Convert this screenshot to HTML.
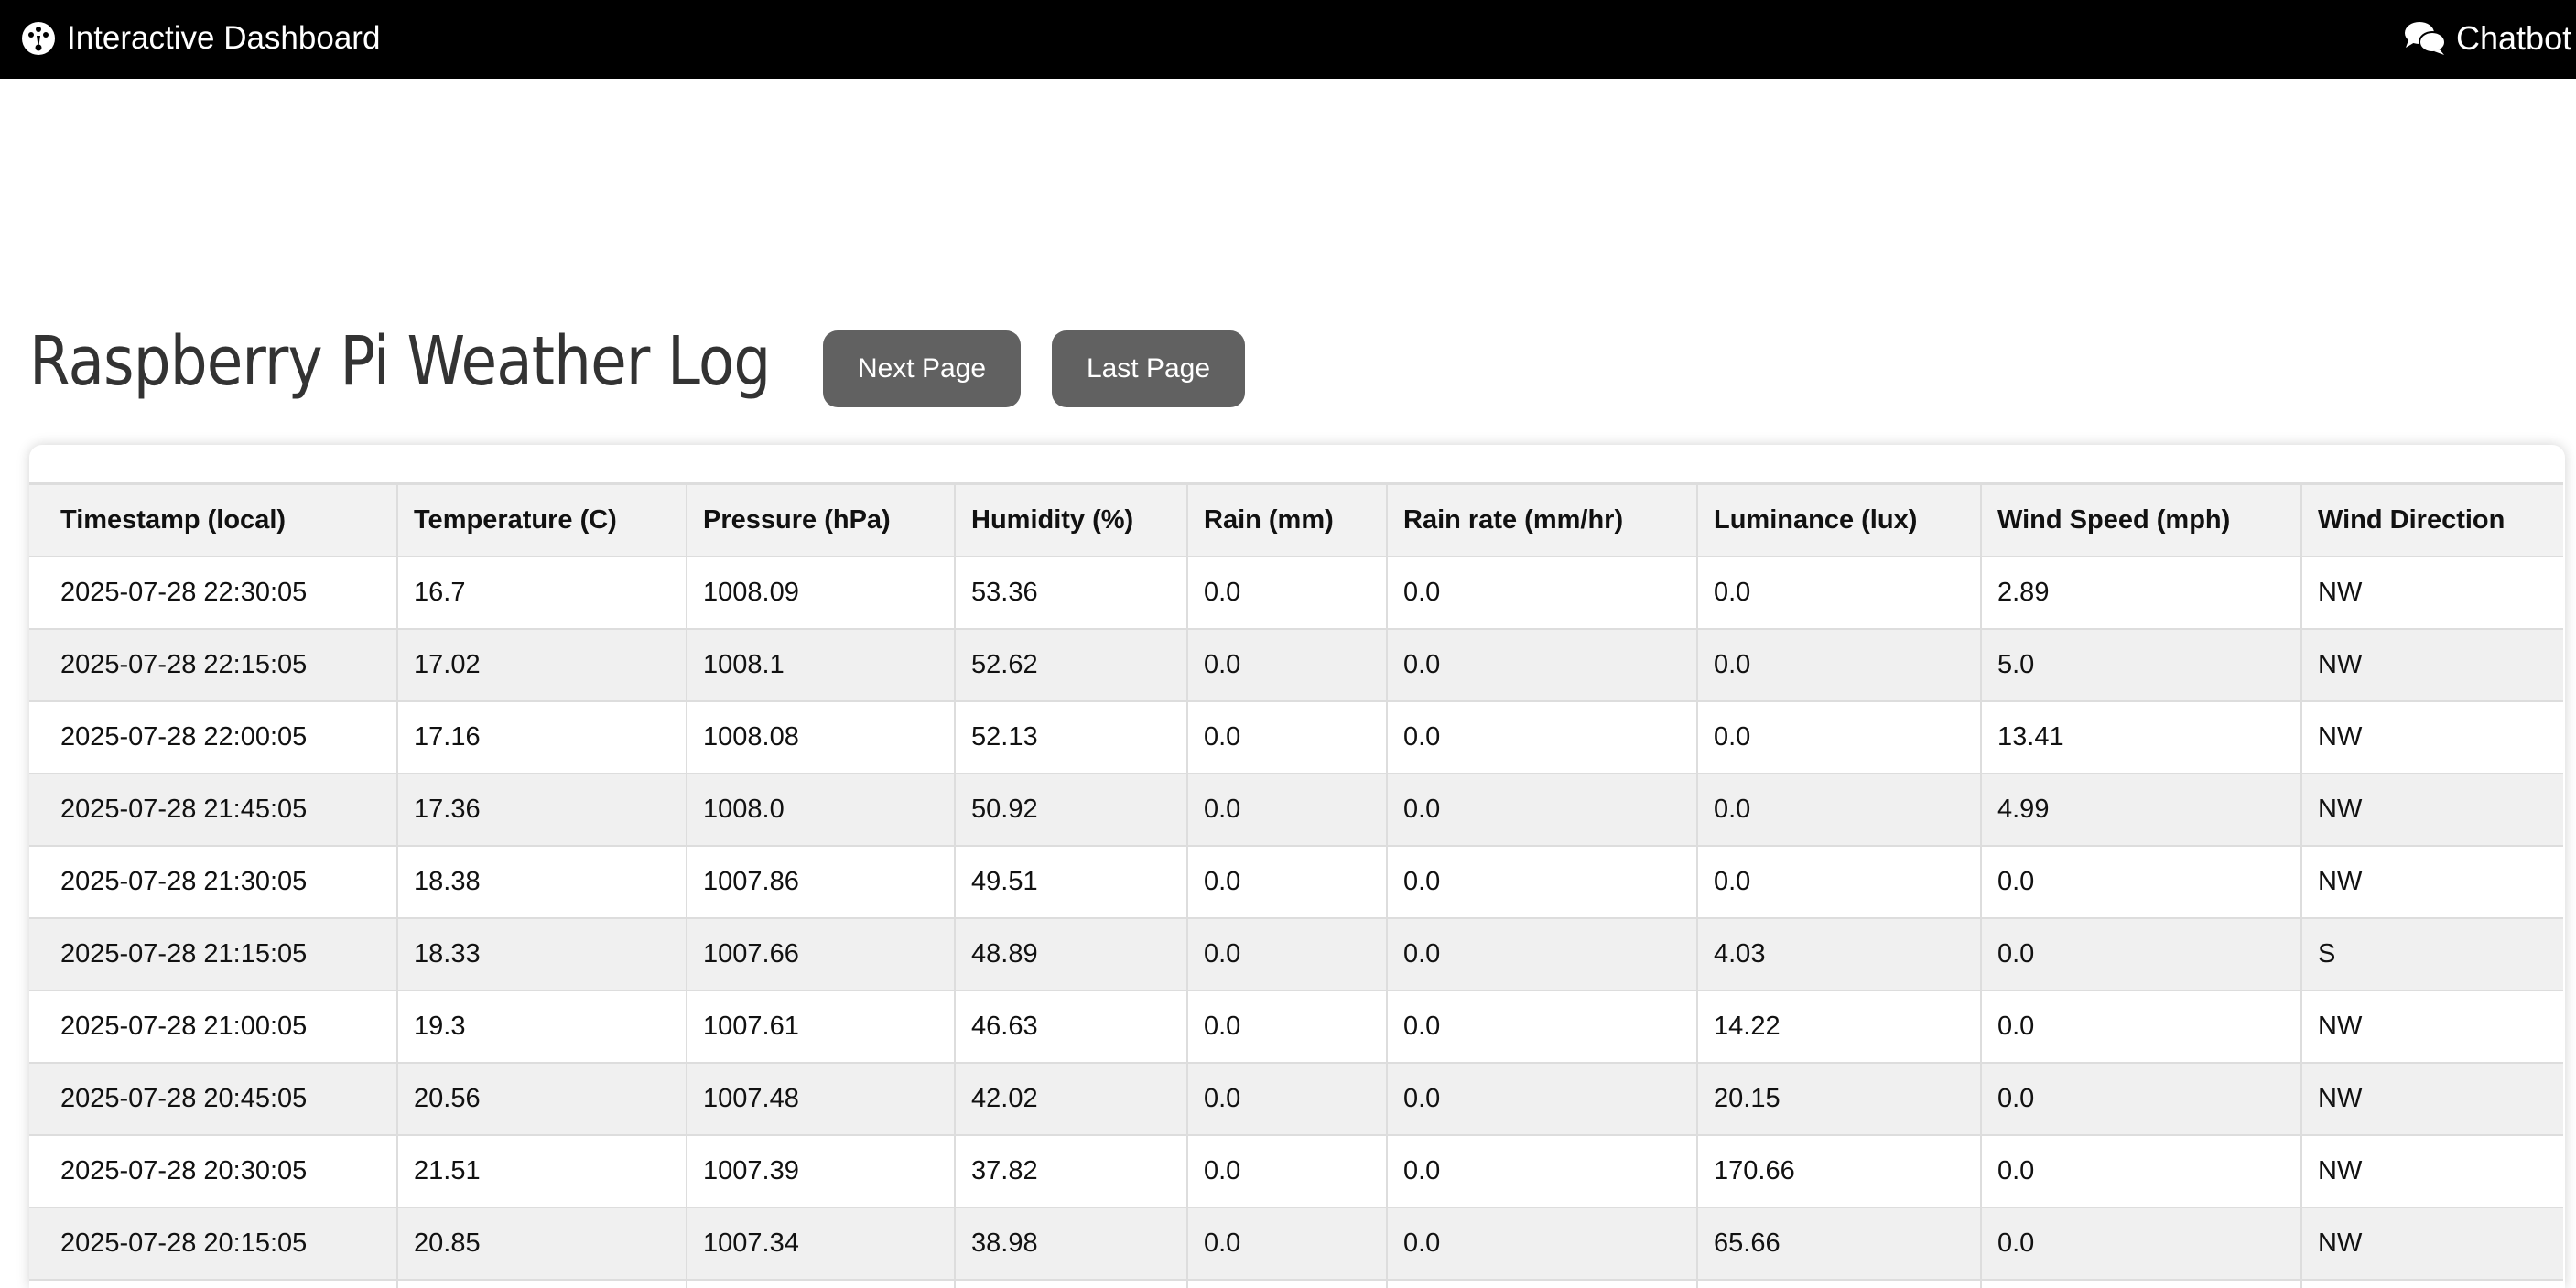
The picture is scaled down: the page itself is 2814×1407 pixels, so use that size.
<!DOCTYPE html>
<html><head><meta charset="utf-8"><style>
*{box-sizing:border-box;margin:0;padding:0}
html,body{width:2814px;height:1407px;overflow:hidden}
body{background:#fff;font-family:"Liberation Sans",sans-serif;color:#111;position:relative}
.nav{position:absolute;left:0;top:0;width:2814px;height:86px;background:#000;color:#fff}
.nav .brand{position:absolute;left:23px;top:20px;font-size:35px;line-height:44px;display:flex;align-items:center}
.nav .brand svg{margin-right:12px}
.nav .chat{position:absolute;left:2625px;top:20px;font-size:36px;line-height:44px;display:flex;align-items:center;white-space:nowrap}
.nav .chat svg{margin-right:10px}
h1{position:absolute;left:32px;top:352px;font-weight:normal;font-size:74px;color:#333;font-family:"DejaVu Sans","Liberation Sans",sans-serif;letter-spacing:-1px;transform:scaleX(0.87);transform-origin:left;white-space:nowrap}
.btn{position:absolute;top:361px;height:84px;background:#616161;color:#fff;border-radius:16px;font-size:30px;display:flex;align-items:center;justify-content:center}
.card{position:absolute;left:32px;top:486px;width:2770px;height:921px;background:#fff;border-radius:14px 14px 0 0;box-shadow:0 0 14px rgba(0,0,0,.18);overflow:hidden}
.wrap{position:absolute;left:0;top:41px;width:2768px;height:880px;overflow:hidden}
table{border-collapse:collapse;table-layout:fixed;width:2768px}
td,th{height:79px;border:2px solid #ddd;padding:0 0 0 17px;text-align:left;font-size:29px;white-space:nowrap;overflow:hidden}
td:first-child,th:first-child{padding-left:34px;border-left:none}
th{background:#f2f2f2;font-weight:bold;border-top:3px solid #ddd}
tr:nth-child(odd) td{background:#f0f0f0}
td:last-child,th:last-child{border-right:none}
</style></head><body>
<div class="nav">
<div class="brand"><svg width="38" height="38" viewBox="0 0 38 38"><circle cx="19" cy="19" r="18" fill="#fff"/><circle cx="11" cy="15" r="3" fill="#000"/><circle cx="19" cy="9" r="3" fill="#000"/><circle cx="27" cy="15" r="3" fill="#000"/><path d="M19 30 L21 16 L17 16 Z" fill="#000"/><circle cx="19" cy="29" r="3.5" fill="#000"/></svg>Interactive Dashboard</div>
<div class="chat"><svg width="48" height="40" viewBox="0 0 48 40"><ellipse cx="18" cy="14" rx="16" ry="12" fill="#fff"/><path d="M6 22 L3 30 L13 24Z" fill="#fff"/><ellipse cx="32" cy="24" rx="14" ry="11" fill="#fff" stroke="#000" stroke-width="2"/><path d="M40 32 L45 38 L34 34Z" fill="#fff"/></svg>Chatbot</div>
</div>
<h1>Raspberry Pi Weather Log</h1>
<div class="btn" style="left:899px;width:216px">Next Page</div>
<div class="btn" style="left:1149px;width:211px">Last Page</div>
<div class="card"><div class="wrap">
<table>
<colgroup><col style="width:402px"><col style="width:316px"><col style="width:293px"><col style="width:254px"><col style="width:218px"><col style="width:339px"><col style="width:310px"><col style="width:350px"><col style="width:286px"></colgroup>
<tr><th>Timestamp (local)</th><th>Temperature (C)</th><th>Pressure (hPa)</th><th>Humidity (%)</th><th>Rain (mm)</th><th>Rain rate (mm/hr)</th><th>Luminance (lux)</th><th>Wind Speed (mph)</th><th>Wind Direction</th></tr>
<tr><td>2025-07-28 22:30:05</td><td>16.7</td><td>1008.09</td><td>53.36</td><td>0.0</td><td>0.0</td><td>0.0</td><td>2.89</td><td>NW</td></tr>
<tr><td>2025-07-28 22:15:05</td><td>17.02</td><td>1008.1</td><td>52.62</td><td>0.0</td><td>0.0</td><td>0.0</td><td>5.0</td><td>NW</td></tr>
<tr><td>2025-07-28 22:00:05</td><td>17.16</td><td>1008.08</td><td>52.13</td><td>0.0</td><td>0.0</td><td>0.0</td><td>13.41</td><td>NW</td></tr>
<tr><td>2025-07-28 21:45:05</td><td>17.36</td><td>1008.0</td><td>50.92</td><td>0.0</td><td>0.0</td><td>0.0</td><td>4.99</td><td>NW</td></tr>
<tr><td>2025-07-28 21:30:05</td><td>18.38</td><td>1007.86</td><td>49.51</td><td>0.0</td><td>0.0</td><td>0.0</td><td>0.0</td><td>NW</td></tr>
<tr><td>2025-07-28 21:15:05</td><td>18.33</td><td>1007.66</td><td>48.89</td><td>0.0</td><td>0.0</td><td>4.03</td><td>0.0</td><td>S</td></tr>
<tr><td>2025-07-28 21:00:05</td><td>19.3</td><td>1007.61</td><td>46.63</td><td>0.0</td><td>0.0</td><td>14.22</td><td>0.0</td><td>NW</td></tr>
<tr><td>2025-07-28 20:45:05</td><td>20.56</td><td>1007.48</td><td>42.02</td><td>0.0</td><td>0.0</td><td>20.15</td><td>0.0</td><td>NW</td></tr>
<tr><td>2025-07-28 20:30:05</td><td>21.51</td><td>1007.39</td><td>37.82</td><td>0.0</td><td>0.0</td><td>170.66</td><td>0.0</td><td>NW</td></tr>
<tr><td>2025-07-28 20:15:05</td><td>20.85</td><td>1007.34</td><td>38.98</td><td>0.0</td><td>0.0</td><td>65.66</td><td>0.0</td><td>NW</td></tr>
<tr><td>2025-07-28 20:00:05</td><td>20.9</td><td>1007.3</td><td>39.5</td><td>0.0</td><td>0.0</td><td>80.1</td><td>0.0</td><td>NW</td></tr>
</table>
</div></div>
</body></html>
